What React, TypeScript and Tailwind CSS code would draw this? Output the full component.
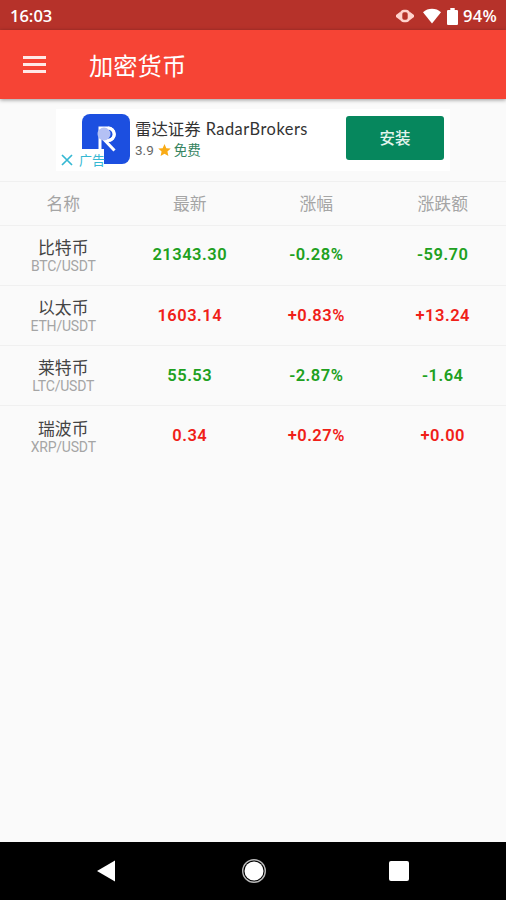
type Quote = {
  name: string;
  pair: string;
  last: string;
  percent: string;
  change: string;
  up: boolean;
};

const columns = ["名称", "最新", "涨幅", "涨跌额"];

const quotes: Quote[] = [
  { name: "比特币", pair: "BTC/USDT", last: "21343.30", percent: "-0.28%", change: "-59.70", up: false },
  { name: "以太币", pair: "ETH/USDT", last: "1603.14", percent: "+0.83%", change: "+13.24", up: true },
  { name: "莱特币", pair: "LTC/USDT", last: "55.53", percent: "-2.87%", change: "-1.64", up: false },
  { name: "瑞波币", pair: "XRP/USDT", last: "0.34", percent: "+0.27%", change: "+0.00", up: true },
];

function StatusBar() {
  return (
    <div className="flex h-[30px] shrink-0 items-center justify-between bg-[#b6322a] pt-[2px] pr-[9px] pl-[10px] text-white">
      <span className="font-['Open_Sans','Noto_Sans',sans-serif] text-[16.5px] leading-none font-semibold">16:03</span>
      <div className="flex items-center">
        <svg width="20" height="16" viewBox="0 0 20 16" className="mr-[8px] text-[#ffd2cd]">
          <path d="M5 4 1 7v2l4 3zM15 4l4 3v2l-4 3z" fill="currentColor" />
          <rect x="6" y="3" width="8" height="10" rx="3" fill="none" stroke="currentColor" strokeWidth="2.6" />
        </svg>
        <svg width="18" height="16" viewBox="0 0 18 16" className="mr-[6px]">
          <path d="M0 4.2C5-.4 13-.4 18 4.2L9 15.5z" fill="currentColor" />
        </svg>
        <svg width="11" height="17" viewBox="0 0 10 17" preserveAspectRatio="none" className="mr-[5px]">
          <path d="M3 0h4v2h2q1 0 1 1v13q0 1-1 1H1q-1 0-1-1V3q0-1 1-1h2z" fill="currentColor" />
        </svg>
        <span className="font-['Open_Sans','Noto_Sans',sans-serif] text-[16.5px] leading-none font-semibold tracking-[0.3px]">94%</span>
      </div>
    </div>
  );
}

function AppBar() {
  return (
    <header className="relative z-10 flex h-[69px] shrink-0 items-center bg-[#f64435] pl-[23px] text-white shadow-[0_1px_4px_rgba(0,0,0,0.4)]">
      <button type="button" aria-label="菜单" className="flex w-[23px] flex-col gap-1">
        <span className="h-[3px] bg-[#ffe9e7]" />
        <span className="h-[3px] bg-[#ffe9e7]" />
        <span className="h-[3px] bg-[#ffe9e7]" />
      </button>
      <h1 className="ml-[43px] pt-[5px] text-[24.3px] leading-none">加密货币</h1>
    </header>
  );
}

function AdBanner() {
  return (
    <div className="flex h-[82px] shrink-0 justify-center pt-[10px]">
      <div className="relative flex h-[62px] w-[394px] bg-white pl-[26px]">
        <svg width="48" height="50" viewBox="0 0 48 50" className="mt-[5px] shrink-0">
          <rect width="48" height="50" rx="8" fill="#1c4fe0" />
          <path d="M18 40V14h8a6.200 6.200 0 0 1 0 12.500h-3l9.500 10" fill="none" stroke="#fff" strokeWidth="3" />
          <circle cx="22" cy="20" r="6.5" fill="#b4c1f5" />
          <path d="M26 14a6.200 6.200 0 0 1 0 12.500" fill="none" stroke="#fff" strokeWidth="3" />
        </svg>
        {/* AdChoices tag over the corner of the logo */}
        <div className="absolute bottom-0 left-0 flex h-[22px] w-[48px] items-center gap-[6px] bg-white pl-[5px] text-[13px] leading-none text-[#35b8d3]">
          <svg width="12" height="12" viewBox="0 0 12 12" className="shrink-0">
            <path d="m1 1 10 10M11 1 1 11" stroke="currentColor" strokeWidth="1.7" />
          </svg>
          <span className="shrink-0">广告</span>
        </div>
        <div className="ml-[5px] flex flex-col pt-[11px]">
          <p className="text-[16.400px] leading-[18px] whitespace-nowrap text-[#333]">
            雷达证券 <span className="ml-px font-['Lato','Noto_Sans_CJK_SC',sans-serif] tracking-[0.500px]">RadarBrokers</span>
          </p>
          <p className="mt-[3px] flex items-center text-[13.500px] leading-[16px] text-[#666]">
            3.9
            <svg width="13" height="12" viewBox="0 0 24 23" className="mr-[3px] ml-[4px]">
              <path d="m12 0 3.500 8 8.500.8-6.400 5.700L19.500 23 12 18.500 4.500 23l1.900-8.500L0 8.800 8.500 8z" fill="#f9ab15" />
            </svg>
            <span className="text-[#36845f]">免费</span>
          </p>
        </div>
        <button
          type="button"
          className="mt-[7px] mr-[6px] ml-auto h-[44px] w-[98px] rounded-[3px] bg-[#06875d] pt-[3px] text-[15.500px] font-medium text-[#e2f4ed]"
        >
          安装
        </button>
      </div>
    </div>
  );
}

function QuoteRow({ quote }: { quote: Quote }) {
  const color = quote.up ? "text-[#f02018]" : "text-[#20a020]";

  return (
    <li className="grid h-[60.300px] grid-cols-4 items-center border-t border-[#f0f0f0] pt-[2px] text-center">
      <div className="flex flex-col items-center">
        <span className="text-[16.800px] leading-[20px] text-[#444]">{quote.name}</span>
        <span className="text-[14px] leading-[17px] tracking-[-0.200px] text-[#a5a5a5]">{quote.pair}</span>
      </div>
      <span className={`pb-px text-[16.500px] font-semibold tracking-[0.500px] ${color}`}>{quote.last}</span>
      <span className={`pb-px text-[16.500px] font-semibold tracking-[0.500px] ${color}`}>{quote.percent}</span>
      <span className={`pb-px text-[16.500px] font-semibold tracking-[0.500px] ${color}`}>{quote.change}</span>
    </li>
  );
}

function NavBar() {
  return (
    <nav className="flex h-[58px] shrink-0 items-center bg-black pl-[96px]">
      <svg width="19" height="22" viewBox="0 0 19 22">
        <path d="M1 11 19 .5v21z" fill="#fff" />
      </svg>
      <svg width="24" height="24" viewBox="0 0 24 24" className="ml-[127px]">
        <circle cx="12" cy="12" r="11.300" fill="none" stroke="#bbb" strokeWidth="1.400" />
        <circle cx="12" cy="12" r="9.500" fill="#fff" />
      </svg>
      <span className="ml-[123px] size-5 rounded-[2px] bg-white" />
    </nav>
  );
}

export default function App() {
  return (
    <div className="flex h-[900px] w-[506px] flex-col overflow-hidden bg-[#fafafa] font-['Roboto','Noto_Sans_CJK_SC',sans-serif]">
      <StatusBar />
      <AppBar />
      <AdBanner />
      <main className="flex-1">
        <div className="grid h-[43.500px] grid-cols-4 items-center border-t border-[#f0f0f0] pt-[2px] text-center text-[16.800px] text-[#a5a5a5]">
          {columns.map((column) => (
            <span key={column}>{column}</span>
          ))}
        </div>
        <ul>
          {quotes.map((quote) => (
            <QuoteRow key={quote.pair} quote={quote} />
          ))}
        </ul>
      </main>
      <NavBar />
    </div>
  );
}
